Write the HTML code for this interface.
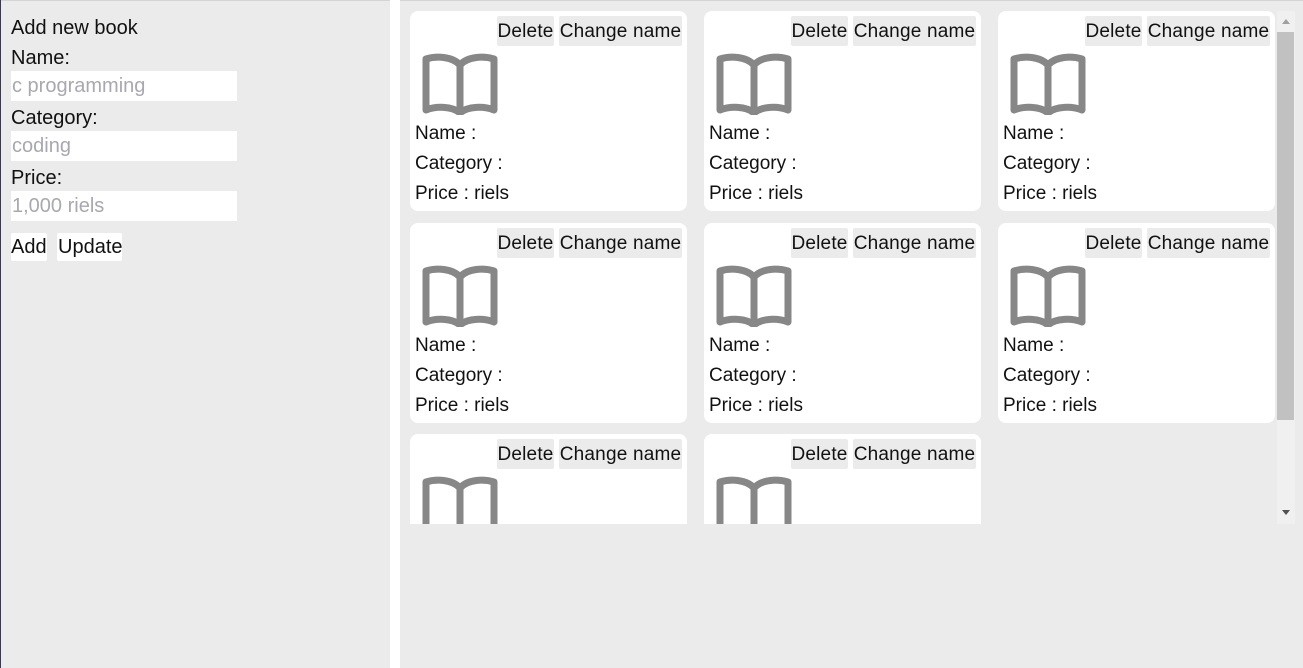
<!DOCTYPE html>
<html><head><style>
*{box-sizing:border-box;margin:0;padding:0}
body{width:1303px;height:668px;background:#ebebeb;font-family:"Liberation Sans",sans-serif;font-size:19px;color:#111;position:relative;overflow:hidden}
.top{position:absolute;left:0;top:0;width:1303px;height:1px;background:#d4d4d4}
.ledge{position:absolute;left:0;top:0;width:1px;height:668px;background:#3a3a4a}
.gap{position:absolute;left:390px;top:0;width:10px;height:668px;background:#fff}
.t{position:absolute;left:11px;line-height:30px;top:1px}
.lp .t{font-size:20px}
.in{position:absolute;left:11px;width:226px;height:30px;background:#fff;color:#a8a8b0;line-height:31px;padding-left:1px;font-size:20px}
.b{position:absolute;top:233px;height:28px;background:#fff;line-height:29px;border-radius:2px;font-size:20px}
.scroll{position:absolute;left:405px;top:11px;width:890px;height:513px;overflow:hidden}
.card{position:absolute;width:277px;height:200px;background:#fff;border-radius:8px}
.btn{position:absolute;top:5px;height:30px;line-height:32px;background:#ebebeb;border-radius:2px;text-align:center;white-space:nowrap;letter-spacing:0.2px}
.card svg{position:absolute;left:12px;top:42px}
.l{position:absolute;left:5px;line-height:31px}
.sb{position:absolute;left:1277px;top:11px;width:18px;height:513px;background:#f0f0f0}
.th{position:absolute;left:1277px;top:32px;width:17px;height:388px;background:#c1c1c1}
</style></head><body>
<div class="top"></div><div class="ledge"></div><div class="gap"></div>
<div class="lp">
<div class="t" style="top:13px">Add new book</div>
<div class="t" style="top:43px">Name:</div>
<div class="in" style="top:71px">c programming</div>
<div class="t" style="top:103px">Category:</div>
<div class="in" style="top:131px">coding</div>
<div class="t" style="top:163px">Price:</div>
<div class="in" style="top:191px">1,000 riels</div>
<div class="b" style="left:11px;width:36px">Add</div>
<div class="b" style="left:57px;width:65px;padding-left:1px">Update</div>
</div>
<div class="scroll">
<script>
var h='';
var pos=[[5,0],[299,0],[593,0],[5,212],[299,212],[593,212],[5,423],[299,423]];
pos.forEach(function(p){
h+='<div class="card" style="left:'+p[0]+'px;top:'+p[1]+'px"><div class="btn" style="left:87px;width:57px">Delete</div><div class="btn" style="left:149px;width:123px">Change name</div>'+
'<svg width="76" height="62" viewBox="0 0 76 62"><path d="M38 12 C30 3 14 3 4 6 V57 C14 53 30 53 38 60 C46 53 62 53 72 57 V6 C62 3 46 3 38 12 Z M38 12 V58" fill="none" stroke="#878787" stroke-width="7" stroke-linejoin="round"/></svg>'+
'<div class="l" style="top:107px">Name :</div><div class="l" style="top:137px">Category :</div><div class="l" style="top:167px">Price : riels</div></div>';
});
document.write(h);
</script>
</div>
<div class="sb"></div><div class="th"></div>
<div style="position:absolute;left:1282px;top:19px;width:0;height:0;border-left:4px solid transparent;border-right:4px solid transparent;border-bottom:5px solid #a0a0a0"></div>
<div style="position:absolute;left:1282px;top:510px;width:0;height:0;border-left:4px solid transparent;border-right:4px solid transparent;border-top:5px solid #505050"></div>
</body></html>
